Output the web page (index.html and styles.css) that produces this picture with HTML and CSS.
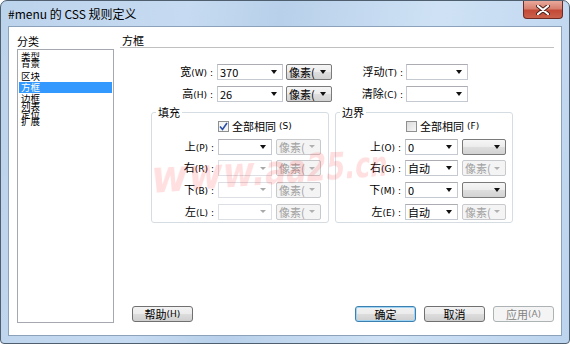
FILE: index.html
```html
<!DOCTYPE html>
<html lang="zh-CN">
<head>
<meta charset="utf-8">
<title>#menu 的 CSS 规则定义</title>
<link rel="stylesheet" href="styles.css">
</head>
<body>
<div class="window">
  <div class="titlebar">
    <span class="title">#menu 的 CSS 规则定义</span>
    <span class="close"><svg width="14" height="10" viewBox="0 0 14 10"><path d="M2 1 L12 9 M12 1 L2 9" stroke="#4a1f1a" stroke-width="4" stroke-linecap="round"/><path d="M2 1 L12 9 M12 1 L2 9" stroke="#fff" stroke-width="2.2" stroke-linecap="round"/></svg></span>
  </div>
  <div class="client">
    <div class="leftcol">
      <div class="caption">分类</div>
      <ul class="list">
        <li class="i1">类型</li>
        <li class="i2">背景</li>
        <li class="i3">区块</li>
        <li class="i4 sel">方框</li>
        <li class="i5">边框</li>
        <li class="i6">列表</li>
        <li class="i7">定位</li>
        <li class="i8">扩展</li>
      </ul>
    </div>
    <div class="rightcol">
      <div class="heading">方框</div>
      <div class="toprows">
        <div class="row">
          <span class="lbl lw">宽<small>(W) :</small></span>
          <span class="combo cw"><span class="val">370</span><span class="arr"></span></span>
          <span class="unit uw"><span class="val">像素(</span><span class="arr"></span></span>
          <span class="lbl lr">浮动<small>(T) :</small></span>
          <span class="combo cr"><span class="val"></span><span class="arr"></span></span>
        </div>
        <div class="row">
          <span class="lbl lw">高<small>(H) :</small></span>
          <span class="combo cw"><span class="val">26</span><span class="arr"></span></span>
          <span class="unit uw"><span class="val">像素(</span><span class="arr"></span></span>
          <span class="lbl lr">清除<small>(C) :</small></span>
          <span class="combo cr"><span class="val"></span><span class="arr"></span></span>
        </div>
      </div>
      <div class="groups">
        <div class="group g1">
          <span class="legend">填充</span>
          <div class="grid">
            <span class="check"><span class="box on"><svg width="9" height="9" viewBox="0 0 9 9"><path d="M1 4.5 L3.5 7.5 L8 1" fill="none" stroke="#2a4fa8" stroke-width="1.6"/></svg></span>全部相同<small>(S)</small></span>
            <span class="lbl">上<small>(P) :</small></span>
            <span class="combo"><span class="val"></span><span class="arr"></span></span>
            <span class="unit dis"><span class="val">像素(</span><span class="arr"></span></span>
            <span class="lbl">右<small>(R) :</small></span>
            <span class="combo dis"><span class="val"></span><span class="arr"></span></span>
            <span class="unit dis"><span class="val">像素(</span><span class="arr"></span></span>
            <span class="lbl">下<small>(B) :</small></span>
            <span class="combo dis"><span class="val"></span><span class="arr"></span></span>
            <span class="unit dis"><span class="val">像素(</span><span class="arr"></span></span>
            <span class="lbl">左<small>(L) :</small></span>
            <span class="combo dis"><span class="val"></span><span class="arr"></span></span>
            <span class="unit dis"><span class="val">像素(</span><span class="arr"></span></span>
          </div>
        </div>
        <div class="group g2">
          <span class="legend">边界</span>
          <div class="grid">
            <span class="check"><span class="box"></span>全部相同<small>(F)</small></span>
            <span class="lbl">上<small>(O) :</small></span>
            <span class="combo"><span class="val">0</span><span class="arr"></span></span>
            <span class="unit"><span class="val"></span><span class="arr"></span></span>
            <span class="lbl">右<small>(G) :</small></span>
            <span class="combo"><span class="val">自动</span><span class="arr"></span></span>
            <span class="unit dis"><span class="val">像素(</span><span class="arr"></span></span>
            <span class="lbl">下<small>(M) :</small></span>
            <span class="combo"><span class="val">0</span><span class="arr"></span></span>
            <span class="unit"><span class="val"></span><span class="arr"></span></span>
            <span class="lbl">左<small>(E) :</small></span>
            <span class="combo"><span class="val">自动</span><span class="arr"></span></span>
            <span class="unit dis"><span class="val">像素(</span><span class="arr"></span></span>
          </div>
        </div>
      </div>
      <div class="buttons">
        <span class="btn help">帮助<small>(H)</small></span>
        <span class="spacer"></span>
        <span class="btn def">确定</span>
        <span class="btn">取消</span>
        <span class="btn dis">应用<small>(A)</small></span>
      </div>
    </div>
    <div class="watermark">www.aa25.cn</div>
  </div>
</div>
</body>
</html>
```
FILE: styles.css
```css
* { box-sizing: border-box; }
html, body { margin: 0; padding: 0; background: #fff; }
body {
  font-family: "Noto Sans CJK SC", "DejaVu Sans", sans-serif;
  font-size: 11px;
  color: #000;
}
small { font-size: 9px; font-family: "DejaVu Sans", "Noto Sans CJK SC", sans-serif; }

.window {
  width: 570px;
  height: 344px;
  border: 1px solid #4f5f70;
  border-radius: 7px 7px 4px 4px;
  background: linear-gradient(100deg, #bcd3ec 0%, #c6dbf1 30%, #b8d0ea 45%, #cfe2f5 70%, #bcd4ee 100%);
  padding: 0 7px 7px 7px;
  display: flex;
  flex-direction: column;
}
.titlebar {
  height: 25px;
  display: flex;
  justify-content: space-between;
  align-items: flex-start;
}
.title {
  font-family: "Noto Sans CJK SC", "DejaVu Sans", sans-serif;
  font-size: 12px;
  line-height: 14px;
  margin-top: 6px;
  color: #000;
}
.close {
  width: 40px;
  height: 18px;
  margin-right: -1px;
  border: 1px solid #6d2b24;
  border-top: none;
  border-radius: 0 0 4px 4px;
  background: linear-gradient(#e9a99b 0%, #d7806f 45%, #c34a36 55%, #c9614c 100%);
  display: flex;
  align-items: center;
  justify-content: center;
}
.client {
  flex: 1;
  position: relative;
  background: #fff;
  border: 1px solid #8ca2ba;
  padding: 7px 7px 12px 8px;
  display: flex;
  gap: 6px;
  overflow: hidden;
}
.leftcol {
  width: 97px;
  display: flex;
  flex-direction: column;
}
.caption {
  line-height: 14px;
  height: 14px;
}
.list {
  flex: 1;
  margin: 1px 0 0 0;
  padding: 1px 1px;
  list-style: none;
  border: 1px solid #a5a8ae;
  font-size: 9.5px;
  line-height: 10px;
}
.list li { padding-left: 2px; overflow: visible; white-space: nowrap; }
.list .i1 { height: 7px; }
.list .i2 { height: 13px; }
.list .i3 { height: 11px; }
.list .i4 { height: 11px; }
.list .i5 { height: 8px; }
.list .i6 { height: 7.5px; }
.list .i7 { height: 7.5px; }
.list .i8 { height: 8px; }
.list .sel { background: #3399ff; color: #fff; line-height: 11px; }

.rightcol {
  width: 434px;
  display: flex;
  flex-direction: column;
}
.heading {
  height: 14px;
  line-height: 12px;
  padding-left: 2px;
  border-bottom: 1px solid #c0c0c0;
}
.toprows {
  margin-top: 16px;
  display: flex;
  flex-direction: column;
  gap: 6px;
}
.row {
  display: flex;
  align-items: center;
  height: 16px;
}
.lbl {
  text-align: right;
  white-space: nowrap;
  line-height: 16px;
}
.lw { width: 93px; margin-right: 4px; }
.cw { width: 66px; margin-right: 3px; }
.uw { width: 46px; }
.lr { width: 71px; margin-right: 3px; }
.cr { width: 62px; }

.combo, .unit {
  height: 16px;
  display: flex;
  align-items: center;
  white-space: nowrap;
  overflow: hidden;
}
.combo {
  border: 1px solid #c5cad2;
  border-top-color: #abadb3;
  background: #fff;
}
.combo .val, .unit .val {
  flex: 1;
  padding-left: 2px;
  line-height: 14px;
  font-family: "Noto Sans CJK SC", "DejaVu Sans", sans-serif;
}
.arr {
  width: 0;
  height: 0;
  border-left: 3.5px solid transparent;
  border-right: 3.5px solid transparent;
  border-top: 4px solid #111;
  margin-right: 5px;
}
.combo.dis { border-color: #dcdfe4; }
.combo.dis .arr { border-top-color: #a9a9a9; border-left-width: 3px; border-right-width: 3px; border-top-width: 3px; }
.unit {
  border: 1px solid #7a7a7a;
  border-radius: 2px;
  background: linear-gradient(#f6f6f6 0%, #ececec 50%, #dedede 51%, #d2d2d2 100%);
}
.unit.dis {
  border-color: #c7c9cc;
  background: #f4f4f4;
  color: #a2a2a2;
}
.unit.dis .arr { border-top-color: #b0b0b0; border-left-width: 3px; border-right-width: 3px; border-top-width: 3px; }

.groups {
  display: flex;
  gap: 6px;
  margin-top: 10px;
  margin-left: 31px;
}
.group {
  border: 1px solid #d5dde3;
  border-radius: 3px;
  height: 111px;
}
.g1 { width: 178px; }
.g2 { width: 178px; }
.legend {
  display: block;
  width: fit-content;
  margin: -8px 0 -2px 4px;
  padding: 0 2px;
  height: 14px;
  line-height: 14px;
  background: #fff;
}
.grid {
  display: grid;
  grid-auto-rows: 16px;
  row-gap: 5.67px;
  align-items: center;
}
.g1 .grid { grid-template-columns: 62px 54px 45px; column-gap: 4px; }
.g2 .grid { grid-template-columns: 65px 53px 44px; column-gap: 4px; }
.check {
  grid-column: 2 / 4;
  display: flex;
  align-items: center;
  gap: 3px;
  height: 13px;
  margin-bottom: -3px;
  white-space: nowrap;
  line-height: 13px;
}
.g2 .check { margin-left: 1px; }
.box {
  width: 11px;
  height: 11px;
  border: 1px solid #8e8f8f;
  background: linear-gradient(135deg, #dcdcdc, #f6f6f6);
  display: flex;
  align-items: center;
  justify-content: center;
}
.box.on { background: #f4f4f4; }

.buttons {
  margin-top: auto;
  margin-bottom: 1px;
  display: flex;
  gap: 8px;
  height: 16px;
}
.spacer { flex: 1; }
.btn {
  width: 61px;
  height: 16px;
  border: 1px solid #707070;
  border-radius: 3px;
  background: linear-gradient(#f2f2f2 0%, #ebebeb 50%, #dddddd 51%, #cfcfcf 100%);
  display: flex;
  align-items: center;
  justify-content: center;
  line-height: 14px;
  white-space: nowrap;
}
.btn.help { margin-left: 12px; }
.btn.def { border-color: #3c7fb1; box-shadow: inset 0 0 0 1px #9fd5f2; }
.btn.dis { border-color: #adb2b5; background: #f4f4f4; color: #838383; }

.watermark {
  position: absolute;
  left: 142px;
  top: 120px;
  font-family: "DejaVu Sans", sans-serif;
  font-weight: bold;
  font-style: italic;
  font-size: 46px;
  line-height: 60px;
  color: rgba(255, 40, 40, 0.15);
  pointer-events: none;
  transform: perspective(420px) rotateY(24deg) rotate(-3deg);
  transform-origin: left center;
  white-space: nowrap;
}
```
